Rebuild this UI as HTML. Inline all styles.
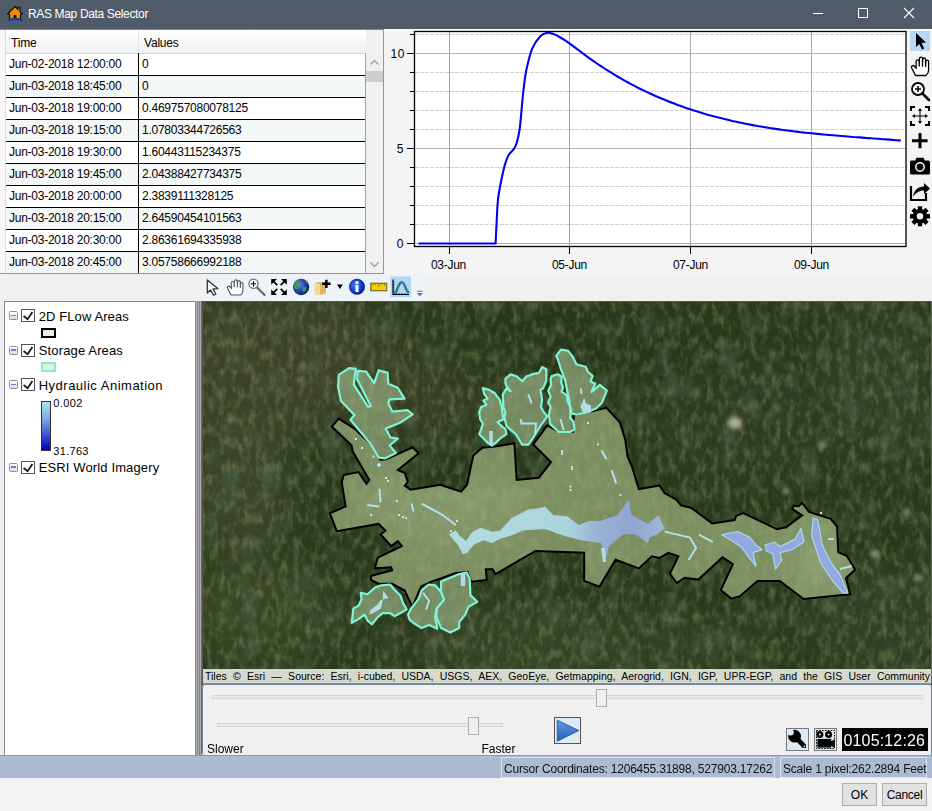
<!DOCTYPE html>
<html><head><meta charset="utf-8">
<style>
*{margin:0;padding:0;box-sizing:border-box}
html,body{width:932px;height:811px;overflow:hidden;background:#f0f0f0;font-family:"Liberation Sans",sans-serif;position:relative}
.a{position:absolute}
.t{position:absolute;white-space:nowrap;line-height:1}
#title{left:0;top:0;width:932px;height:29px;background:#4f5b69}
#tbl{left:0;top:29px;width:384px;height:245px;background:#fff}
.row{position:absolute;left:6px;width:359px;height:22px;border-top:1px solid #000}
.row:first-of-type{border-top:none}
.row.e{background:#f3f8f6}
.cell{position:absolute;top:4px;font-size:12px;letter-spacing:-0.25px;color:#000;white-space:nowrap;line-height:1}
#chart{left:384px;top:29px;width:548px;height:245px;background:#f4f4f4}
#legend{left:4px;top:301px;width:192px;height:455px;background:#fff;border:1px solid #828790}
#map{left:202px;top:301px;width:730px;height:384px;background:#3f4d30;overflow:hidden}
#anim{left:202px;top:684px;width:730px;height:71px;background:#f0f0f0;border-left:1px solid #70859c;border-right:1px solid #6a8098;border-radius:3px 3px 0 3px;box-shadow:inset 0 1px 0 #70859c}
#status{left:0;top:755px;width:932px;height:23px;background:#adbbd2;border-top:1px solid #8d9aab}
#bottom{left:0;top:778px;width:932px;height:33px;background:#f3f3f3}
.btn{position:absolute;background:#e1e1e1;border:1px solid #adadad;font-size:13px;text-align:center;line-height:23px;color:#000}
</style></head><body>

<!-- Title bar -->
<div id="title" class="a">
  <svg class="a" style="left:6px;top:4px" width="18" height="18" viewBox="0 0 18 18">
    <path d="M1.5 10 L9 2.5 L12 5.5 L12 3 L14 3 L14 7.5 L16.5 10 L14.5 10 L14.5 15 L3.5 15 L3.5 10 Z" fill="#f08c00" stroke="#111" stroke-width="1.2" stroke-linejoin="round"/>
    <rect x="7.5" y="11" width="3" height="4" fill="#111"/>
    <path d="M1 15.5 Q9 12.5 17 15.5 L16 17.5 Q9 15 2 17.5 Z" fill="#1540b0"/>
  </svg>
  <div class="t" style="left:28px;top:7.5px;font-size:12px;letter-spacing:-0.35px;color:#fff">RAS Map Data Selector</div>
  <div class="a" style="left:813px;top:13px;width:10px;height:1px;background:#fff"></div>
  <div class="a" style="left:858px;top:8px;width:10px;height:10px;border:1px solid #fff"></div>
  <svg class="a" style="left:903px;top:7px" width="12" height="12" viewBox="0 0 12 12"><path d="M1 1 L11 11 M11 1 L1 11" stroke="#fff" stroke-width="1.1"/></svg>
</div>


<!-- Table -->
<div id="tbl" class="a">
  <div class="a" style="left:0;top:0;width:6px;height:244px;background:#f7f7f7;border-right:1px solid #dcdcdc"></div>
  <div class="a" style="left:6px;top:0;width:360px;height:25px;background:linear-gradient(#fff,#f1f2f4);border-bottom:1px solid #d5d5d5"></div>
  <div class="a" style="left:138px;top:1px;width:1px;height:22px;background:#e4e4e4"></div>
  <div class="t" style="left:11px;top:8px;font-size:12px;letter-spacing:-0.2px">Time</div>
  <div class="t" style="left:144px;top:8px;font-size:12px;letter-spacing:-0.2px">Values</div>
<div class="row" style="top:24px;border-top:1px solid transparent;background-clip:padding-box"><div class="cell" style="left:3px">Jun-02-2018 12:00:00</div><div class="cell" style="left:136px">0</div></div>
<div class="row e" style="top:46px"><div class="cell" style="left:3px">Jun-03-2018 18:45:00</div><div class="cell" style="left:136px">0</div></div>
<div class="row" style="top:68px"><div class="cell" style="left:3px">Jun-03-2018 19:00:00</div><div class="cell" style="left:136px">0.469757080078125</div></div>
<div class="row e" style="top:90px"><div class="cell" style="left:3px">Jun-03-2018 19:15:00</div><div class="cell" style="left:136px">1.07803344726563</div></div>
<div class="row" style="top:112px"><div class="cell" style="left:3px">Jun-03-2018 19:30:00</div><div class="cell" style="left:136px">1.60443115234375</div></div>
<div class="row e" style="top:134px"><div class="cell" style="left:3px">Jun-03-2018 19:45:00</div><div class="cell" style="left:136px">2.04388427734375</div></div>
<div class="row" style="top:156px"><div class="cell" style="left:3px">Jun-03-2018 20:00:00</div><div class="cell" style="left:136px">2.3839111328125</div></div>
<div class="row e" style="top:178px"><div class="cell" style="left:3px">Jun-03-2018 20:15:00</div><div class="cell" style="left:136px">2.64590454101563</div></div>
<div class="row" style="top:200px"><div class="cell" style="left:3px">Jun-03-2018 20:30:00</div><div class="cell" style="left:136px">2.86361694335938</div></div>
<div class="row e" style="top:222px"><div class="cell" style="left:3px">Jun-03-2018 20:45:00</div><div class="cell" style="left:136px">3.05758666992188</div></div>

  <div class="a" style="left:138px;top:24px;width:1px;height:220px;background:#000"></div>
  <div class="a" style="left:365px;top:24px;width:1px;height:220px;background:#a0a0a0"></div>
  <div class="a" style="left:366px;top:0;width:17px;height:244px;background:#f0f0f0"></div>
  <svg class="a" style="left:369px;top:29px" width="11" height="8" viewBox="0 0 11 8"><path d="M1.5 6.5 L5.5 2.5 L9.5 6.5" fill="none" stroke="#a0a0a0" stroke-width="1.4"/></svg>
  <div class="a" style="left:366px;top:42px;width:17px;height:11px;background:#cdcdcd"></div>
  <svg class="a" style="left:369px;top:232px" width="11" height="8" viewBox="0 0 11 8"><path d="M1.5 1.5 L5.5 5.5 L9.5 1.5" fill="none" stroke="#a0a0a0" stroke-width="1.4"/></svg>
  <div class="a" style="left:383px;top:0;width:1px;height:245px;background:#7d9cc4"></div>
  <div class="a" style="left:0;top:244px;width:384px;height:1px;background:#7d9cc4"></div>
</div>

<!-- Chart -->
<div id="chart" class="a">
<svg class="a" style="left:0;top:0" width="548" height="245" viewBox="384 29 548 245">
<rect x="414.5" y="31.5" width="491.5" height="215" fill="#fff"/>
<line x1="415" y1="34.5" x2="906" y2="34.5" stroke="#d2d2d2" stroke-width="1" stroke-dasharray="4 1"/>
<line x1="410" y1="34.5" x2="414" y2="34.5" stroke="#000" stroke-width="1"/>
<line x1="415" y1="72.5" x2="906" y2="72.5" stroke="#d2d2d2" stroke-width="1" stroke-dasharray="4 1"/>
<line x1="410" y1="72.5" x2="414" y2="72.5" stroke="#000" stroke-width="1"/>
<line x1="415" y1="91.5" x2="906" y2="91.5" stroke="#d2d2d2" stroke-width="1" stroke-dasharray="4 1"/>
<line x1="410" y1="91.5" x2="414" y2="91.5" stroke="#000" stroke-width="1"/>
<line x1="415" y1="110.5" x2="906" y2="110.5" stroke="#d2d2d2" stroke-width="1" stroke-dasharray="4 1"/>
<line x1="410" y1="110.5" x2="414" y2="110.5" stroke="#000" stroke-width="1"/>
<line x1="415" y1="129.5" x2="906" y2="129.5" stroke="#d2d2d2" stroke-width="1" stroke-dasharray="4 1"/>
<line x1="410" y1="129.5" x2="414" y2="129.5" stroke="#000" stroke-width="1"/>
<line x1="415" y1="167.5" x2="906" y2="167.5" stroke="#d2d2d2" stroke-width="1" stroke-dasharray="4 1"/>
<line x1="410" y1="167.5" x2="414" y2="167.5" stroke="#000" stroke-width="1"/>
<line x1="415" y1="186.5" x2="906" y2="186.5" stroke="#d2d2d2" stroke-width="1" stroke-dasharray="4 1"/>
<line x1="410" y1="186.5" x2="414" y2="186.5" stroke="#000" stroke-width="1"/>
<line x1="415" y1="205.5" x2="906" y2="205.5" stroke="#d2d2d2" stroke-width="1" stroke-dasharray="4 1"/>
<line x1="410" y1="205.5" x2="414" y2="205.5" stroke="#000" stroke-width="1"/>
<line x1="415" y1="224.5" x2="906" y2="224.5" stroke="#d2d2d2" stroke-width="1" stroke-dasharray="4 1"/>
<line x1="410" y1="224.5" x2="414" y2="224.5" stroke="#000" stroke-width="1"/>
<line x1="415" y1="53.5" x2="906" y2="53.5" stroke="#b4b4b4" stroke-width="1"/>
<line x1="407" y1="53.5" x2="414" y2="53.5" stroke="#000" stroke-width="1"/>
<line x1="415" y1="148.5" x2="906" y2="148.5" stroke="#b4b4b4" stroke-width="1"/>
<line x1="407" y1="148.5" x2="414" y2="148.5" stroke="#000" stroke-width="1"/>
<line x1="415" y1="243.5" x2="906" y2="243.5" stroke="#b4b4b4" stroke-width="1"/>
<line x1="407" y1="243.5" x2="414" y2="243.5" stroke="#000" stroke-width="1"/>
<line x1="449.5" y1="32" x2="449.5" y2="246" stroke="#a8a8a8" stroke-width="1"/>
<line x1="449.5" y1="246" x2="449.5" y2="254" stroke="#000" stroke-width="1"/>
<line x1="569.5" y1="32" x2="569.5" y2="246" stroke="#a8a8a8" stroke-width="1"/>
<line x1="569.5" y1="246" x2="569.5" y2="254" stroke="#000" stroke-width="1"/>
<line x1="690.5" y1="32" x2="690.5" y2="246" stroke="#a8a8a8" stroke-width="1"/>
<line x1="690.5" y1="246" x2="690.5" y2="254" stroke="#000" stroke-width="1"/>
<line x1="811.5" y1="32" x2="811.5" y2="246" stroke="#a8a8a8" stroke-width="1"/>
<line x1="811.5" y1="246" x2="811.5" y2="254" stroke="#000" stroke-width="1"/>
<path d="M418.5,243.5 L495.6,243.5 C495.8,238.8 496.1,232.2 496.5,225.0 C496.9,217.8 497.2,207.6 497.9,200.5 C498.6,193.4 499.6,188.6 500.8,182.7 C502.0,176.8 503.5,169.6 504.8,165.0 C506.1,160.4 507.2,157.6 508.7,155.0 C510.2,152.4 512.4,151.1 513.7,149.2 C515.0,147.2 515.6,146.6 516.6,143.3 C517.6,140.0 518.8,135.0 519.6,129.4 C520.4,123.8 521.0,116.3 521.6,109.7 C522.2,103.1 522.7,96.7 523.5,90.0 C524.3,83.3 525.0,76.3 526.5,69.4 C528.0,62.5 529.9,54.2 532.2,48.6 C534.6,43.0 538.1,38.7 540.6,36.1 C543.1,33.5 545.4,33.1 547.5,32.8 C549.6,32.5 551.5,33.3 553.5,34.0 C555.5,34.7 557.5,35.9 559.5,37.0 C561.5,38.1 563.5,39.4 565.5,40.7 C567.5,42.0 569.5,43.4 571.5,44.8 C573.5,46.3 575.5,47.8 577.5,49.3 C579.5,50.8 581.5,52.3 583.5,53.8 C585.5,55.3 587.5,56.8 589.5,58.3 C591.5,59.7 593.5,61.1 595.5,62.5 C597.5,63.9 599.5,65.2 601.5,66.5 C603.5,67.9 605.5,69.2 607.5,70.4 C609.5,71.7 611.5,72.9 613.5,74.1 C615.5,75.4 617.5,76.5 619.5,77.7 C621.5,78.9 623.5,80.0 625.5,81.1 C627.5,82.2 629.5,83.3 631.5,84.4 C633.5,85.4 635.5,86.4 637.5,87.5 C639.5,88.5 641.5,89.5 643.5,90.4 C645.5,91.4 647.5,92.3 649.5,93.3 C651.5,94.2 653.5,95.1 655.5,96.0 C657.5,96.8 659.5,97.7 661.5,98.5 C663.5,99.4 665.5,100.2 667.5,101.0 C669.5,101.8 671.5,102.6 673.5,103.3 C675.5,104.1 677.5,104.8 679.5,105.6 C681.5,106.3 683.5,107.0 685.5,107.7 C687.5,108.4 689.5,109.0 691.5,109.7 C693.5,110.4 695.5,111.0 697.5,111.6 C699.5,112.2 701.5,112.8 703.5,113.4 C705.5,114.0 707.5,114.6 709.5,115.2 C711.5,115.7 713.5,116.3 715.5,116.8 C717.5,117.3 719.5,117.8 721.5,118.3 C723.5,118.8 725.5,119.3 727.5,119.8 C729.5,120.3 731.5,120.7 733.5,121.2 C735.5,121.6 737.5,122.1 739.5,122.5 C741.5,122.9 743.5,123.3 745.5,123.7 C747.5,124.1 749.5,124.5 751.5,124.9 C753.5,125.3 755.5,125.6 757.5,126.0 C759.5,126.3 761.5,126.7 763.5,127.0 C765.5,127.3 767.5,127.7 769.5,128.0 C771.5,128.3 773.5,128.6 775.5,128.9 C777.5,129.2 779.5,129.5 781.5,129.7 C783.5,130.0 785.5,130.3 787.5,130.5 C789.5,130.8 791.5,131.1 793.5,131.3 C795.5,131.5 797.5,131.8 799.5,132.0 C801.5,132.2 803.5,132.5 805.5,132.7 C807.5,132.9 809.5,133.1 811.5,133.3 C813.5,133.5 815.5,133.7 817.5,133.9 C819.5,134.1 821.5,134.3 823.5,134.5 C825.5,134.7 827.5,134.8 829.5,135.0 C831.5,135.2 833.5,135.4 835.5,135.5 C837.5,135.7 839.5,135.9 841.5,136.0 C843.5,136.2 845.5,136.4 847.5,136.5 C849.5,136.7 851.5,136.8 853.5,137.0 C855.5,137.1 857.5,137.3 859.5,137.4 C861.5,137.6 863.5,137.7 865.5,137.9 C867.5,138.0 869.5,138.1 871.5,138.3 C873.5,138.4 875.5,138.6 877.5,138.7 C879.5,138.9 881.5,139.0 883.5,139.2 C885.5,139.3 887.5,139.5 889.5,139.6 C891.5,139.8 893.6,139.9 895.5,140.1 C897.4,140.2 900.0,140.4 900.9,140.5" fill="none" stroke="#0000f5" stroke-width="2.1" stroke-linejoin="round"/>
<rect x="414.5" y="31.5" width="491.5" height="215" fill="none" stroke="#000" stroke-width="1.3"/>
<rect x="910" y="31" width="20" height="20" fill="#b8d9f6"/>
<path d="M916 33 L916 47 L919.3 44 L922 49.5 L924.2 48.5 L921.6 43 L926 42.5 Z" fill="#000"/>
<path d="M915.5 75.5 L911.8 68.2 Q911 66.2 912.5 65.6 Q913.8 65.2 915 66.8 L916.2 68.3 L916 61.5 Q916.2 59.8 917.6 59.8 Q919 59.8 919.1 61.5 L919.2 66 L919.4 58.8 Q919.6 57.2 921 57.2 Q922.4 57.2 922.5 58.8 L922.5 66 L922.7 59.5 Q922.9 58 924.2 58 Q925.5 58 925.6 59.5 L925.6 66.5 L925.9 61.5 Q926.1 60.2 927.3 60.2 Q928.5 60.2 928.6 61.5 L928.6 70 Q928.6 73.5 926 75.5 Z" fill="#fff" stroke="#000" stroke-width="1.3" stroke-linejoin="round"/>
<circle cx="918" cy="89" r="6" fill="#fff" stroke="#000" stroke-width="1.8"/>
<path d="M918 86 L918 92 M915 89 L921 89" stroke="#000" stroke-width="1.6"/>
<path d="M922.3 93.3 L929 100" stroke="#000" stroke-width="2.6" stroke-linecap="round"/>
<path d="M911 111 L911 107 L915 107 M925 107 L929 107 L929 111 M929 121 L929 125 L925 125 M915 125 L911 125 L911 121" fill="none" stroke="#000" stroke-width="2"/>
<path d="M920 109 L920 123 M913 116 L927 116" stroke="#000" stroke-width="1"/>
<path d="M920 108 L918 111 L922 111 Z M920 124 L918 121 L922 121 Z M912 116 L915 114 L915 118 Z M928 116 L925 114 L925 118 Z" fill="#000"/>
<path d="M918.5 133 L921.5 133 L921.5 139.2 L927.6 139.2 L927.6 142.2 L921.5 142.2 L921.5 148.3 L918.5 148.3 L918.5 142.2 L912 142.2 L912 139.2 L918.5 139.2 Z" fill="#000"/>
<path d="M910 162 Q910 160.5 911.5 160.5 L915 160.5 L916.5 157.8 L923.5 157.8 L925 160.5 L928.5 160.5 Q930 160.5 930 162 L930 173 Q930 174.5 928.5 174.5 L911.5 174.5 Q910 174.5 910 173 Z" fill="#000"/>
<circle cx="920" cy="167" r="4.2" fill="none" stroke="#fff" stroke-width="1.5"/>
<path d="M911 186 L911 200 L926 200 L926 193" fill="none" stroke="#000" stroke-width="2.2"/>
<path d="M913 197 C914 190 918 186.5 924 186.5 L924 183 L930 188.5 L924 194 L924 190.5 C919 190.5 915.5 193 913 197 Z" fill="#000"/>
<g transform="translate(920 216.3)">
<path d="M-1.8 -10 L1.8 -10 L2.4 -6.8 L4.6 -5.8 L7.3 -7.7 L9.8 -5.2 L7.9 -2.5 L8.8 -0.3 L10 0 L10 1.8" fill="none"/>
<circle r="7.2" fill="#000"/>
<g fill="#000"><rect x="-2.2" y="-10" width="4.4" height="20"/><rect x="-2.2" y="-10" width="4.4" height="20" transform="rotate(45)"/><rect x="-2.2" y="-10" width="4.4" height="20" transform="rotate(90)"/><rect x="-2.2" y="-10" width="4.4" height="20" transform="rotate(135)"/></g>
<circle r="3.2" fill="#f4f4f4"/>
</g>
</svg>
<div class="t" style="left:0px;top:18.5px;font-size:12px;width:21px;text-align:right;letter-spacing:0.6px">10</div>
<div class="t" style="left:0px;top:113.5px;font-size:12px;width:19.5px;text-align:right">5</div>
<div class="t" style="left:0px;top:208.5px;font-size:12px;width:19.5px;text-align:right">0</div>
<div class="t" style="left:47px;top:230px;font-size:12px;letter-spacing:-0.3px">03-Jun</div>
<div class="t" style="left:168px;top:230px;font-size:12px;letter-spacing:-0.3px">05-Jun</div>
<div class="t" style="left:289px;top:230px;font-size:12px;letter-spacing:-0.3px">07-Jun</div>
<div class="t" style="left:410px;top:230px;font-size:12px;letter-spacing:-0.3px">09-Jun</div>
</div>

<!-- Map toolbar -->
<div class="a" style="left:202px;top:275px;width:224px;height:26px;background:#eef3fa;border-radius:3px 0 0 0"></div>
<svg class="a" style="left:202px;top:274px" width="226" height="28" viewBox="202 274 226 28">
<path d="M207.3 280 L207.3 293 L210.6 290 L213.6 295.2 L215.8 294 L213 289 L217.8 288.6 Z" fill="#fff" stroke="#333" stroke-width="1.3" stroke-linejoin="round"/>
<path d="M231 295 L227.6 288.2 Q227 286.6 228.4 286.2 Q229.6 286 230.6 287.4 L231.6 288.6 L231.2 283 Q231.3 281.5 232.6 281.5 Q233.9 281.5 234 283 L234.2 287 L234.3 281.3 Q234.5 279.9 235.8 279.9 Q237.1 279.9 237.2 281.3 L237.3 287 L237.5 281.9 Q237.7 280.6 238.9 280.6 Q240.1 280.6 240.2 281.9 L240.3 287.5 L240.6 283.6 Q240.8 282.5 241.8 282.5 Q242.8 282.5 242.9 283.6 L242.9 290.5 Q242.9 293.5 240.5 295 Z" fill="#fff" stroke="#555" stroke-width="1.1" stroke-linejoin="round"/>
<path d="M257 287.5 L264.6 295" stroke="#6d6455" stroke-width="2.2" stroke-linecap="round"/>
<circle cx="253.5" cy="283.8" r="4.6" fill="#f4f4f4" stroke="#777" stroke-width="1.3"/>
<path d="M253.5 281.2 L253.5 286.4 M250.9 283.8 L256.1 283.8" stroke="#000" stroke-width="1.1"/>
<g fill="#000"><path d="M271.2 279 L277 279 L271.2 284.8 Z M286.8 279 L281 279 L286.8 284.8 Z M271.2 295 L277 295 L271.2 289.2 Z M286.8 295 L281 295 L286.8 289.2 Z"/></g>
<path d="M273 280.8 L277.3 285.1 M285 280.8 L280.7 285.1 M273 293.2 L277.3 288.9 M285 293.2 L280.7 288.9" stroke="#000" stroke-width="1.7"/>
<defs><radialGradient id="gl" cx="0.35" cy="0.35" r="0.7"><stop offset="0" stop-color="#6a8ee8"/><stop offset="0.6" stop-color="#1d3fae"/><stop offset="1" stop-color="#0c1f6a"/></radialGradient>
<radialGradient id="ig" cx="0.4" cy="0.4" r="0.65"><stop offset="0" stop-color="#4f7ff0"/><stop offset="0.7" stop-color="#0c35c0"/><stop offset="1" stop-color="#061a80"/></radialGradient></defs>
<circle cx="301.1" cy="287" r="8.2" fill="url(#gl)"/>
<path d="M296 282 Q299 280 301 282.5 Q300 285 297.5 285.5 Q296 287 297.5 289 Q296 290 294.5 288 Q293.8 284 296 282 Z M302.5 287 Q305 286 306.5 288 Q306 291 303.5 292 Q302 290 302.5 287 Z M304 280.5 Q307 281.5 308 284 Q306 283.5 304 280.5 Z" fill="#3da040"/>
<path d="M314.8 283 L320 282 L326 283 L326 293.5 L320 295 L314.8 294 Z" fill="#d9b75a"/>
<path d="M314.8 283 L320 284 L320 295 L314.8 294 Z" fill="#f2dc8a"/>
<path d="M322.2 283.8 L330.6 283.8 M326.4 279.8 L326.4 288" stroke="#000" stroke-width="2.4"/>
<path d="M337 284.5 L342.8 284.5 L339.9 289 Z" fill="#000"/>
<circle cx="357" cy="286.8" r="7.7" fill="url(#ig)" stroke="#05207a" stroke-width="0.6"/>
<rect x="355.5" y="285" width="3" height="7" fill="#fff"/>
<rect x="355.5" y="281.3" width="3" height="2.6" fill="#fff"/>
<rect x="370.8" y="283.2" width="16" height="7.6" fill="#f0d000" stroke="#6b5a10" stroke-width="1"/>
<path d="M373 283.7 L373 286 M375.5 283.7 L375.5 285 M378.7 283.7 L378.7 287 M381.8 283.7 L381.8 285 M384.5 283.7 L384.5 286" stroke="#8a7515" stroke-width="0.8"/>
<rect x="390.4" y="276.5" width="20.6" height="20.6" fill="#b4d6f5"/>
<path d="M393 279.5 L393 294.5 L409 294.5" fill="none" stroke="#000" stroke-width="1.2"/>
<path d="M393 282 L394.5 282 M393 285 L394.5 285 M393 288 L394.5 288 M393 291 L394.5 291 M396 294.5 L396 293 M399 294.5 L399 293 M402 294.5 L402 293 M405 294.5 L405 293" stroke="#000" stroke-width="0.8"/>
<path d="M395 293 C397.5 292 398 283 401.5 282.2 C405 281.6 405.5 291 408.2 292.2" fill="none" stroke="#2c8294" stroke-width="2.6" stroke-linecap="round"/>
<path d="M417 291.3 L422.6 291.3" stroke="#777" stroke-width="1"/>
<path d="M416.8 293 L422.8 293 L419.8 296.6 Z" fill="#777"/>
</svg>

<!-- Legend -->
<div id="legend" class="a">
<div class="a" style="left:4px;top:9px;width:9px;height:9px;border:1px solid #8f8f8f;border-radius:1.5px;background:linear-gradient(#fff,#dedede)"><div class="a" style="left:1px;top:2.7px;width:5px;height:1.4px;background:#6a7acc"></div></div>
<div class="a" style="left:16px;top:7px;width:13.5px;height:13px;border:1px solid #555;background:#fff"></div>
<svg class="a" style="left:16px;top:7px" width="14" height="13" viewBox="0 0 14 13"><path d="M2.6 7 L6.6 10.2 L11.4 3" fill="none" stroke="#1a1a1a" stroke-width="1.8"/></svg>
<div class="t" style="left:33.7px;top:7.6px;font-size:13px;letter-spacing:0.1px">2D FLow Areas</div>
<div class="a" style="left:36px;top:25.5px;width:15px;height:10px;border:2px solid #000;background:#e8ede6"></div>
<div class="a" style="left:4px;top:43.5px;width:9px;height:9px;border:1px solid #8f8f8f;border-radius:1.5px;background:linear-gradient(#fff,#dedede)"><div class="a" style="left:1px;top:2.7px;width:5px;height:1.4px;background:#6a7acc"></div></div>
<div class="a" style="left:16px;top:41.5px;width:13.5px;height:13px;border:1px solid #555;background:#fff"></div>
<svg class="a" style="left:16px;top:41.5px" width="14" height="13" viewBox="0 0 14 13"><path d="M2.6 7 L6.6 10.2 L11.4 3" fill="none" stroke="#1a1a1a" stroke-width="1.8"/></svg>
<div class="t" style="left:33.7px;top:42.1px;font-size:13px;letter-spacing:0.15px">Storage Areas</div>
<div class="a" style="left:36px;top:60.3px;width:15px;height:10px;border:2px solid #80f0d0;background:#e6ece6"></div>
<div class="a" style="left:4px;top:78px;width:9px;height:9px;border:1px solid #8f8f8f;border-radius:1.5px;background:linear-gradient(#fff,#dedede)"><div class="a" style="left:1px;top:2.7px;width:5px;height:1.4px;background:#6a7acc"></div></div>
<div class="a" style="left:16px;top:76px;width:13.5px;height:13px;border:1px solid #555;background:#fff"></div>
<svg class="a" style="left:16px;top:76px" width="14" height="13" viewBox="0 0 14 13"><path d="M2.6 7 L6.6 10.2 L11.4 3" fill="none" stroke="#1a1a1a" stroke-width="1.8"/></svg>
<div class="t" style="left:33.7px;top:76.6px;font-size:13px;letter-spacing:0.5px">Hydraulic Animation</div>
<div class="a" style="left:35.8px;top:98.5px;width:10.2px;height:50.3px;border:1px solid #333;background:linear-gradient(#a8e4ee,#7fa8e0 35%,#3850d0 70%,#0000b0)"></div>
<div class="t" style="left:48.3px;top:95.5px;font-size:11px;letter-spacing:0.4px">0.002</div>
<div class="t" style="left:48.3px;top:144.2px;font-size:11px;letter-spacing:0.3px">31.763</div>
<div class="a" style="left:4px;top:160.7px;width:9px;height:9px;border:1px solid #8f8f8f;border-radius:1.5px;background:linear-gradient(#fff,#dedede)"><div class="a" style="left:1px;top:2.7px;width:5px;height:1.4px;background:#6a7acc"></div></div>
<div class="a" style="left:16px;top:158.7px;width:13.5px;height:13px;border:1px solid #555;background:#fff"></div>
<svg class="a" style="left:16px;top:158.7px" width="14" height="13" viewBox="0 0 14 13"><path d="M2.6 7 L6.6 10.2 L11.4 3" fill="none" stroke="#1a1a1a" stroke-width="1.8"/></svg>
<div class="t" style="left:33.7px;top:159.29999999999998px;font-size:13px;letter-spacing:0.13px">ESRI World Imagery</div>
</div>

<!-- Splitter -->
<div class="a" style="left:195px;top:301px;width:7px;height:454px;background:linear-gradient(90deg,#868b95 0,#868b95 1px,#aaa 1px,#aaa 2px,#878787 2px,#878787 3px,#aaa 3px,#aaa 4px,#878787 4px,#878787 5px,#aaa 5px,#aaa 6px,#6a6a6a 6px)"></div>

<!-- Map -->
<!--MAP-->
<div id="map" class="a">
<svg class="a" style="left:0;top:0" width="730" height="384" viewBox="202 301 730 384">
<defs>
<filter id="blur8" x="-50%" y="-50%" width="200%" height="200%"><feGaussianBlur stdDeviation="18"/></filter>
<filter id="noise" x="0" y="0" width="100%" height="100%"><feTurbulence type="fractalNoise" baseFrequency="0.16 0.08" numOctaves="4" seed="11"/><feColorMatrix type="matrix" values="0 0 0 0 0.44  0 0 0 0 0.48  0 0 0 0 0.22  2.2 0 0 0 -0.95"/></filter>
<filter id="noise2" x="0" y="0" width="100%" height="100%"><feTurbulence type="fractalNoise" baseFrequency="0.05 0.035" numOctaves="4" seed="5"/><feColorMatrix type="matrix" values="0 0 0 0 0.09  0 0 0 0 0.16  0 0 0 0 0.09  -2.4 0 0 0 1.25"/></filter>
<linearGradient id="rv" x1="0" y1="0" x2="1" y2="0"><stop offset="0" stop-color="#b8e2ec"/><stop offset="0.55" stop-color="#b0dcea"/><stop offset="0.68" stop-color="#9cb6e2"/><stop offset="0.85" stop-color="#92a8de"/><stop offset="1" stop-color="#a0bce4"/></linearGradient>
<filter id="blur2" x="-100%" y="-100%" width="300%" height="300%"><feGaussianBlur stdDeviation="2.2"/></filter></defs>
<rect x="202" y="301" width="730" height="384" fill="#2a3a1c"/>
<g filter="url(#blur8)">
<ellipse cx="280" cy="360" rx="120" ry="70" fill="#3f4428" opacity="0.9"/>
<ellipse cx="420" cy="400" rx="60" ry="40" fill="#3f4428" opacity="0.5"/>
<ellipse cx="240" cy="480" rx="50" ry="80" fill="#3d4829" opacity="0.8"/>
<ellipse cx="260" cy="610" rx="80" ry="55" fill="#3b4826" opacity="0.8"/>
<ellipse cx="540" cy="645" rx="130" ry="35" fill="#3a4827" opacity="0.7"/>
<ellipse cx="600" cy="340" rx="110" ry="40" fill="#26341c" opacity="0.8"/>
<ellipse cx="740" cy="420" rx="90" ry="60" fill="#2f3d23" opacity="0.7"/>
<ellipse cx="880" cy="380" rx="60" ry="70" fill="#334427" opacity="0.7"/>
<ellipse cx="880" cy="620" rx="70" ry="50" fill="#334427" opacity="0.7"/>
<ellipse cx="700" cy="650" rx="80" ry="30" fill="#364529" opacity="0.6"/>
</g>
<rect x="202" y="301" width="730" height="384" filter="url(#noise)" opacity="0.34"/>
<rect x="202" y="301" width="730" height="384" filter="url(#noise2)" opacity="0.5"/>
<g filter="url(#blur2)" fill="#c0bfa0">
<ellipse cx="735" cy="423" rx="7" ry="6" opacity="0.85"/>
<ellipse cx="786" cy="491" rx="3.5" ry="3.5" opacity="0.6"/>
<ellipse cx="822" cy="445" rx="4" ry="4" opacity="0.5"/>
<ellipse cx="875" cy="554" rx="5" ry="4" opacity="0.6"/>
<ellipse cx="907" cy="512" rx="4" ry="4" opacity="0.5"/>
<ellipse cx="918" cy="578" rx="5" ry="4" opacity="0.5"/>
<ellipse cx="862" cy="526" rx="3" ry="3" opacity="0.5"/>
<ellipse cx="300" cy="380" rx="4" ry="3" opacity="0.4"/>
<ellipse cx="230" cy="420" rx="3" ry="3" opacity="0.4"/>
</g>
<clipPath id="mc"><path d="M338.7 418.7 L354.5 428.6 L370.7 444.1 L380.2 459.7 L386.1 459.2 L412.7 447.3 L418.6 453.3 L397.9 470.0 L404.8 473.0 L407.8 481.9 L404.8 485.8 L410.7 489.8 L440.3 484.8 L461.1 491.7 L467.0 484.8 L473.3 455.5 L482.2 447.7 L495.5 446.6 L514.4 443.3 L516.6 479.9 L538.8 477.7 L551.0 462.1 L533.2 444.4 L547.3 425.3 L557.6 431.1 L573.0 431.7 L573.8 415.6 L606.5 407.8 L619.8 422.2 L625.3 440.0 L627.6 456.6 L632.0 466.6 L638.8 489.0 L659.5 485.5 L664.7 493.3 L675.9 499.3 L681.1 505.4 L691.5 508.0 L712.2 523.5 L734.6 520.0 L736.3 515.7 L743.3 513.1 L777.0 529.3 L786.0 527.2 L802.1 515.3 L792.3 509.1 L793.7 505.6 L798.6 506.3 L802.1 502.8 L809.0 511.9 L830.7 518.8 L837.0 526.5 L838.3 552.3 L846.7 555.8 L855.1 569.7 L846.0 578.1 L850.2 594.2 L803.5 599.0 L779.8 580.9 L757.4 580.9 L740.0 596.2 L731.2 598.6 L720.8 590.0 L732.9 564.1 L722.5 557.2 L698.4 579.6 L684.6 577.9 L676.8 583.0 L669.9 573.6 L678.5 556.3 L668.2 552.8 L659.5 558.0 L651.8 556.3 L638.8 568.4 L615.6 559.7 L599.4 586.8 L584.2 580.9 L584.2 552.8 L535.5 550.9 L495.5 574.2 L492.6 569.2 L485.8 569.2 L486.8 579.9 L471.3 581.8 L467.5 572.1 L455.9 573.1 L430.8 581.8 L421.1 586.6 L412.4 606.9 L404.7 590.5 L392.1 583.7 L378.6 583.7 L370.9 579.9 L370.9 576.0 L392.1 570.2 L391.2 567.3 L374.8 568.3 L377.7 557.7 L401.8 546.1 L397.9 541.2 L391.2 546.1 L380.6 534.5 L385.4 530.6 L378.6 523.9 L336.8 531.2 L329.9 513.4 L345.6 506.5 L341.7 481.9 L343.7 475.0 L358.5 472.0 L366.4 483.8 L369.3 479.9 L352.6 451.3 L351.6 445.4 L331.8 426.6 Z"/></clipPath>
<path d="M338.7 418.7 L354.5 428.6 L370.7 444.1 L380.2 459.7 L386.1 459.2 L412.7 447.3 L418.6 453.3 L397.9 470.0 L404.8 473.0 L407.8 481.9 L404.8 485.8 L410.7 489.8 L440.3 484.8 L461.1 491.7 L467.0 484.8 L473.3 455.5 L482.2 447.7 L495.5 446.6 L514.4 443.3 L516.6 479.9 L538.8 477.7 L551.0 462.1 L533.2 444.4 L547.3 425.3 L557.6 431.1 L573.0 431.7 L573.8 415.6 L606.5 407.8 L619.8 422.2 L625.3 440.0 L627.6 456.6 L632.0 466.6 L638.8 489.0 L659.5 485.5 L664.7 493.3 L675.9 499.3 L681.1 505.4 L691.5 508.0 L712.2 523.5 L734.6 520.0 L736.3 515.7 L743.3 513.1 L777.0 529.3 L786.0 527.2 L802.1 515.3 L792.3 509.1 L793.7 505.6 L798.6 506.3 L802.1 502.8 L809.0 511.9 L830.7 518.8 L837.0 526.5 L838.3 552.3 L846.7 555.8 L855.1 569.7 L846.0 578.1 L850.2 594.2 L803.5 599.0 L779.8 580.9 L757.4 580.9 L740.0 596.2 L731.2 598.6 L720.8 590.0 L732.9 564.1 L722.5 557.2 L698.4 579.6 L684.6 577.9 L676.8 583.0 L669.9 573.6 L678.5 556.3 L668.2 552.8 L659.5 558.0 L651.8 556.3 L638.8 568.4 L615.6 559.7 L599.4 586.8 L584.2 580.9 L584.2 552.8 L535.5 550.9 L495.5 574.2 L492.6 569.2 L485.8 569.2 L486.8 579.9 L471.3 581.8 L467.5 572.1 L455.9 573.1 L430.8 581.8 L421.1 586.6 L412.4 606.9 L404.7 590.5 L392.1 583.7 L378.6 583.7 L370.9 579.9 L370.9 576.0 L392.1 570.2 L391.2 567.3 L374.8 568.3 L377.7 557.7 L401.8 546.1 L397.9 541.2 L391.2 546.1 L380.6 534.5 L385.4 530.6 L378.6 523.9 L336.8 531.2 L329.9 513.4 L345.6 506.5 L341.7 481.9 L343.7 475.0 L358.5 472.0 L366.4 483.8 L369.3 479.9 L352.6 451.3 L351.6 445.4 L331.8 426.6 Z" fill="#9fb480" fill-opacity="0.69"/>
<g clip-path="url(#mc)" filter="url(#blur8)"><ellipse cx="440" cy="505" rx="90" ry="35" fill="#d8e4c8" opacity="0.1"/><ellipse cx="820" cy="560" rx="30" ry="30" fill="#d8e4c8" opacity="0.2"/></g>
<path d="M338.7 418.7 L354.5 428.6 L370.7 444.1 L380.2 459.7 L386.1 459.2 L412.7 447.3 L418.6 453.3 L397.9 470.0 L404.8 473.0 L407.8 481.9 L404.8 485.8 L410.7 489.8 L440.3 484.8 L461.1 491.7 L467.0 484.8 L473.3 455.5 L482.2 447.7 L495.5 446.6 L514.4 443.3 L516.6 479.9 L538.8 477.7 L551.0 462.1 L533.2 444.4 L547.3 425.3 L557.6 431.1 L573.0 431.7 L573.8 415.6 L606.5 407.8 L619.8 422.2 L625.3 440.0 L627.6 456.6 L632.0 466.6 L638.8 489.0 L659.5 485.5 L664.7 493.3 L675.9 499.3 L681.1 505.4 L691.5 508.0 L712.2 523.5 L734.6 520.0 L736.3 515.7 L743.3 513.1 L777.0 529.3 L786.0 527.2 L802.1 515.3 L792.3 509.1 L793.7 505.6 L798.6 506.3 L802.1 502.8 L809.0 511.9 L830.7 518.8 L837.0 526.5 L838.3 552.3 L846.7 555.8 L855.1 569.7 L846.0 578.1 L850.2 594.2 L803.5 599.0 L779.8 580.9 L757.4 580.9 L740.0 596.2 L731.2 598.6 L720.8 590.0 L732.9 564.1 L722.5 557.2 L698.4 579.6 L684.6 577.9 L676.8 583.0 L669.9 573.6 L678.5 556.3 L668.2 552.8 L659.5 558.0 L651.8 556.3 L638.8 568.4 L615.6 559.7 L599.4 586.8 L584.2 580.9 L584.2 552.8 L535.5 550.9 L495.5 574.2 L492.6 569.2 L485.8 569.2 L486.8 579.9 L471.3 581.8 L467.5 572.1 L455.9 573.1 L430.8 581.8 L421.1 586.6 L412.4 606.9 L404.7 590.5 L392.1 583.7 L378.6 583.7 L370.9 579.9 L370.9 576.0 L392.1 570.2 L391.2 567.3 L374.8 568.3 L377.7 557.7 L401.8 546.1 L397.9 541.2 L391.2 546.1 L380.6 534.5 L385.4 530.6 L378.6 523.9 L336.8 531.2 L329.9 513.4 L345.6 506.5 L341.7 481.9 L343.7 475.0 L358.5 472.0 L366.4 483.8 L369.3 479.9 L352.6 451.3 L351.6 445.4 L331.8 426.6 Z" fill="none" stroke="#000" stroke-width="2" stroke-linejoin="miter"/>
<path d="M338.8 374.9 L349.0 368.1 L355.8 368.8 L353.7 384.4 L368.0 406.8 L370.7 406.1 L357.1 379.0 L357.8 370.9 L366.0 371.5 L374.1 383.1 L378.8 370.2 L387.7 372.9 L388.3 383.7 L397.8 387.8 L404.6 398.7 L389.7 399.3 L388.3 403.4 L392.4 411.6 L407.3 410.2 L412.8 414.3 L400.6 422.4 L385.6 428.5 L390.4 437.3 L397.8 438.7 L389.7 445.5 L395.8 452.9 L385.0 458.4 L378.8 457.7 L370.7 444.1 L350.4 419.7 L354.4 415.0 L340.9 400.7 L338.1 387.1 Z" fill="#98b082" fill-opacity="0.68" stroke="#7ff3d3" stroke-width="2.2" stroke-linejoin="round"/>
<path d="M482.9 388.1 L488.6 389.6 L494.9 393.3 L499.6 399.6 L501.7 406.9 L502.8 414.3 L503.3 419.5 L497.5 422.1 L501.2 425.8 L505.4 428.9 L506.4 434.2 L500.2 438.4 L496.0 442.6 L491.8 445.7 L487.6 442.6 L482.3 437.3 L479.2 434.2 L481.3 428.9 L482.9 423.7 L480.2 419.5 L479.2 412.2 L481.3 406.9 L486.5 404.8 L483.4 400.6 L487.6 398.5 L484.4 394.4 Z" fill="#98b082" fill-opacity="0.68" stroke="#7ff3d3" stroke-width="2.2" stroke-linejoin="round"/>
<path d="M505.4 378.6 L510.6 374.4 L516.9 376.5 L522.2 381.2 L526.4 376.5 L533.7 373.9 L539.0 372.9 L542.1 367.1 L546.3 369.2 L546.3 380.7 L543.1 388.1 L540.5 390.2 L542.1 399.6 L541.0 406.9 L543.1 411.1 L547.3 416.4 L542.1 423.7 L537.9 430.0 L532.7 438.4 L528.5 444.7 L522.2 444.7 L515.9 434.2 L510.6 430.0 L506.4 425.8 L504.4 417.4 L505.4 412.2 L503.3 406.9 L502.8 394.4 L506.4 388.6 L510.6 391.2 L506.4 386.0 L505.4 382.8 Z" fill="#98b082" fill-opacity="0.68" stroke="#7ff3d3" stroke-width="2.2" stroke-linejoin="round"/>
<path d="M551.7 376.1 L557.6 374.3 L561.7 376.7 L561.1 382.5 L562.9 387.2 L561.7 391.9 L567.0 395.4 L567.5 401.3 L571.7 409.5 L569.9 417.7 L573.4 421.2 L574.6 429.4 L570.5 431.8 L558.8 431.8 L550.6 424.7 L548.8 415.3 L550.6 407.1 L548.2 402.4 L550.6 396.6 L548.2 390.7 L551.1 384.9 L550.6 379.0 Z" fill="#98b082" fill-opacity="0.68" stroke="#7ff3d3" stroke-width="2.2" stroke-linejoin="round"/>
<path d="M556.4 355.6 L561.1 349.7 L568.1 350.9 L572.8 356.7 L576.3 364.3 L585.7 366.7 L588.1 372.0 L592.8 376.1 L590.4 381.3 L595.1 383.7 L591.6 391.9 L599.8 384.9 L606.8 390.7 L602.1 402.4 L596.3 408.3 L586.9 412.4 L576.3 414.8 L570.5 413.0 L569.3 400.1 L567.5 391.9 L565.2 380.2 L561.1 369.6 L558.2 360.2 Z" fill="#98b082" fill-opacity="0.68" stroke="#7ff3d3" stroke-width="2.2" stroke-linejoin="round"/>
<path d="M360.8 592.8 L367.5 594.3 L375.0 587.5 L381.1 585.3 L390.1 584.5 L394.6 589.8 L400.6 595.8 L402.8 602.6 L406.6 609.3 L400.6 613.1 L394.6 616.1 L390.1 613.1 L382.6 613.1 L377.3 617.6 L372.0 624.3 L367.5 620.6 L364.5 614.6 L358.5 619.1 L351.8 622.8 L353.3 608.6 L358.5 605.6 L361.5 599.6 Z" fill="#98b082" fill-opacity="0.68" stroke="#7ff3d3" stroke-width="2.2" stroke-linejoin="round"/>
<path d="M411.1 608.6 L418.6 598.8 L421.6 590.5 L428.4 584.5 L435.1 585.3 L441.1 592.0 L444.1 599.6 L436.6 608.6 L435.1 616.8 L437.4 628.8 L429.1 625.1 L421.6 628.1 L415.6 624.3 L409.6 619.8 L408.1 614.6 Z" fill="#98b082" fill-opacity="0.68" stroke="#7ff3d3" stroke-width="2.2" stroke-linejoin="round"/>
<path d="M441.1 581.5 L450.2 577.8 L459.2 574.0 L466.7 572.5 L469.7 578.5 L470.4 595.0 L477.2 601.8 L468.2 607.1 L465.2 614.6 L459.2 622.1 L459.2 628.1 L450.2 632.6 L441.1 628.1 L436.6 617.6 L436.6 608.6 L444.1 599.6 L441.1 592.0 Z" fill="#98b082" fill-opacity="0.68" stroke="#7ff3d3" stroke-width="2.2" stroke-linejoin="round"/>
<path d="M448.8 534.6 L455.8 530.4 L460.0 536.0 L466.0 541.0 L472.5 531.8 L480.9 527.7 L492.0 531.8 L500.4 530.4 L511.6 517.9 L528.3 509.5 L539.5 508.1 L545.0 506.7 L553.4 515.1 L567.4 516.5 L578.5 524.9 L589.7 520.7 L600.0 521.0 L618.0 515.0 L628.5 500.0 L631.5 515.0 L648.0 524.0 L658.6 515.0 L664.6 528.6 L657.0 534.6 L649.5 537.6 L648.0 543.6 L636.0 534.6 L624.0 534.0 L609.2 545.8 L606.4 556.9 L600.8 543.0 L581.3 540.2 L564.6 536.0 L545.0 529.0 L522.7 530.4 L514.4 534.6 L500.4 538.8 L492.0 543.0 L483.7 540.2 L473.9 544.4 L467.0 552.8 L462.8 554.2 L458.0 545.0 L452.0 538.0 Z" fill="url(#rv)" fill-opacity="0.9"/>
<path d="M721.6 534.6 L738.0 531.6 L750.0 537.6 L756.0 545.0 L762.0 549.6 L753.0 552.6 L756.0 566.0 L748.6 557.0 L741.0 546.6 L729.0 539.0 Z" fill="#92a8de" stroke="#a8d4ea" stroke-width="1.3" stroke-linejoin="round"/>
<path d="M765.0 545.0 L774.0 542.0 L780.0 546.6 L795.0 539.0 L801.0 528.6 L804.0 542.0 L792.0 549.6 L780.0 552.6 L781.7 560.0 L775.7 569.0 L772.7 554.0 L766.7 551.0 Z" fill="#92a8de" stroke="#a8d4ea" stroke-width="1.3" stroke-linejoin="round"/>
<path d="M813.2 518.0 L817.7 519.5 L822.2 545.0 L831.2 563.0 L840.2 575.0 L847.7 593.0 L843.2 593.0 L832.7 581.0 L820.7 563.0 L811.7 536.0 Z" fill="#92a8de" stroke="#a8d4ea" stroke-width="1.3" stroke-linejoin="round"/>
<path d="M383.1 590.5 L388.6 598.0 L380.3 600.3 L377.3 604.8 L370.5 610.1 L369.0 614.6 L373.5 613.1 L381.0 608.6 L382.6 601.0 Z" fill="#b0dce8"/>
<path d="M584.0 398.3 L586.3 403.6 L591.0 405.4 L591.0 412.4 L583.4 413.0 L580.4 407.1 Z" fill="#b0dce8"/>
<path d="M460.7 574.0 L465.2 574.0 L465.2 586.0 L460.7 586.0 Z" fill="#b0dce8"/>
<path d="M489.2 431.0 L492.8 431.0 L492.8 444.7 L489.2 444.7 Z" fill="#b0dce8"/>
<path d="M562 450 L562 455" fill="none" stroke="#b0e0ea" stroke-width="2"/>
<path d="M601.4 450.2 L606.6 459.2" fill="none" stroke="#b0e0ea" stroke-width="2"/>
<path d="M572 466 L572 470" fill="none" stroke="#b0e0ea" stroke-width="2"/>
<path d="M611.7 470.1 L616.2 483.7" fill="none" stroke="#b0e0ea" stroke-width="2"/>
<path d="M379.5 488.8 L380.5 502.6" fill="none" stroke="#b0e0ea" stroke-width="2"/>
<path d="M367.3 505 L379.2 506.5" fill="none" stroke="#b0e0ea" stroke-width="2"/>
<path d="M411.5 503.6 L413.5 511.4" fill="none" stroke="#b0e0ea" stroke-width="2"/>
<path d="M377 465 L381 465" fill="none" stroke="#b0e0ea" stroke-width="2"/>
<path d="M379 463 L379 467" fill="none" stroke="#b0e0ea" stroke-width="2"/>
<path d="M604 548 L605 562" fill="none" stroke="#b0e0ea" stroke-width="2"/>
<path d="M421.6 503.6 L430.7 508.5 L441.8 514.5 L448 519 L456 525.2" fill="none" stroke="#b0e0ea" stroke-width="2"/>
<path d="M664.6 531.6 L690 537.6 L696 548 L688.6 560" fill="none" stroke="#b0e0ea" stroke-width="2"/>
<path d="M699 534.6 L712.6 542" fill="none" stroke="#b0e0ea" stroke-width="2"/>
<path d="M828 539 L834 539" fill="none" stroke="#b0e0ea" stroke-width="2"/>
<path d="M840 569 L852 566" fill="none" stroke="#b0e0ea" stroke-width="2"/>
<path d="M602 548 L604 562" fill="none" stroke="#b0e0ea" stroke-width="2"/>
<path d="M423.1 592.8 L429.1 601 L426.1 609.3" fill="none" stroke="#b0e0ea" stroke-width="2"/>
<path d="M520.5 419 L521.5 423.5 L536 423.5 L535 434" fill="none" stroke="#b0e0ea" stroke-width="2"/>
<path d="M528.5 394.5 L531.5 403.5" fill="none" stroke="#b0e0ea" stroke-width="2"/>
<path d="M581 388.5 L581.5 394" fill="none" stroke="#b0e0ea" stroke-width="2"/>
<path d="M560.5 419 L563.5 430" fill="none" stroke="#b0e0ea" stroke-width="2"/>
<rect x="355" y="438" width="2" height="2" fill="#c0e6ee"/>
<rect x="361" y="447" width="2" height="2" fill="#c0e6ee"/>
<rect x="372.5" y="455.5" width="2" height="2" fill="#c0e6ee"/>
<rect x="385" y="477" width="2" height="2" fill="#c0e6ee"/>
<rect x="387" y="480" width="2" height="2" fill="#c0e6ee"/>
<rect x="396" y="500" width="2" height="2" fill="#c0e6ee"/>
<rect x="398" y="514" width="2" height="2" fill="#c0e6ee"/>
<rect x="402" y="516" width="2" height="2" fill="#c0e6ee"/>
<rect x="405" y="517" width="2" height="2" fill="#c0e6ee"/>
<rect x="370" y="514" width="2" height="2" fill="#c0e6ee"/>
<rect x="587" y="422" width="2" height="2" fill="#c0e6ee"/>
<rect x="597" y="443.5" width="2" height="2" fill="#c0e6ee"/>
<rect x="569.5" y="485.5" width="2" height="2" fill="#c0e6ee"/>
<rect x="569.5" y="489" width="2" height="2" fill="#c0e6ee"/>
<rect x="619.5" y="494" width="2" height="2" fill="#c0e6ee"/>
<rect x="820" y="512" width="2" height="2" fill="#c0e6ee"/>
<rect x="456" y="520" width="2" height="2" fill="#c0e6ee"/>
<rect x="450" y="530" width="2" height="2" fill="#c0e6ee"/>
<rect x="202" y="669" width="730" height="15" fill="#d6d9cd"/>
<rect x="202" y="683" width="730" height="1" fill="#8c8c8c"/>
<rect x="202" y="301" width="730" height="1" fill="#555"/>
<rect x="202" y="301" width="1" height="383" fill="#555"/>
<rect x="931" y="301" width="1" height="383" fill="#666"/>
</svg>
<div class="t" style="left:3px;top:369.8px;width:725px;font-size:10.5px;text-align:justify;text-align-last:justify;color:#000">Tiles © Esri — Source: Esri, i-cubed, USDA, USGS, AEX, GeoEye, Getmapping, Aerogrid, IGN, IGP, UPR-EGP, and the GIS User Community</div>
</div>
<!-- Animation -->
<div id="anim" class="a">
<div class="a" style="left:9px;top:11px;width:711px;height:4px;background:#e7eaea;border:1px solid #d6d6d6"></div>
<div class="a" style="left:393px;top:5px;width:11px;height:18px;background:#f0f0f0;border:1px solid #adadad"></div>
<div class="a" style="left:14px;top:39px;width:286px;height:4px;background:#e7eaea;border:1px solid #d6d6d6"></div>
<div class="a" style="left:265px;top:33px;width:11px;height:18px;background:#f0f0f0;border:1px solid #adadad"></div>
<div class="t" style="left:4px;top:59px;font-size:12px">Slower</div>
<div class="t" style="left:278.5px;top:59px;font-size:12px">Faster</div>
<div class="a" style="left:351px;top:33px;width:27px;height:27px;background:#dceaf6;border:1px solid #555"></div>
<svg class="a" style="left:351px;top:33px" width="27" height="27" viewBox="0 0 27 27"><defs><linearGradient id="pg" x1="0" y1="0" x2="0" y2="1"><stop offset="0" stop-color="#5d9ae0"/><stop offset="1" stop-color="#2860b8"/></linearGradient></defs><path d="M3.3 3.2 L24.8 13.5 L3.3 24.2 Z" fill="url(#pg)" stroke="#1d4a90" stroke-width="0.8"/></svg>
<div class="a" style="left:583px;top:44px;width:23px;height:23px;background:#dceaf6;border:1px solid #7a7a7a"></div>
<svg class="a" style="left:583px;top:44px" width="23" height="23" viewBox="0 0 23 23"><defs><mask id="wm"><rect width="23" height="23" fill="#fff"/><circle cx="4.6" cy="4.3" r="3.2" fill="#000"/><path d="M4.6 4.3 L0 -0.5" stroke="#000" stroke-width="4.6"/><circle cx="18.4" cy="18.4" r="0.9" fill="#000"/></mask></defs><g mask="url(#wm)"><circle cx="8.6" cy="8.2" r="6.4" fill="#000"/><path d="M8.6 8.2 L18.6 18.6" stroke="#000" stroke-width="4.8" stroke-linecap="round"/></g></svg>
<div class="a" style="left:611px;top:44px;width:23px;height:23px;background:#dceaf6;border:1px solid #7a7a7a"></div>
<svg class="a" style="left:611px;top:44px" width="23" height="23" viewBox="0 0 23 23"><rect x="2.5" y="2.5" width="18" height="18" fill="none" stroke="#000" stroke-width="1" stroke-dasharray="1.6 1.2"/><circle cx="5.9" cy="6.4" r="3.5" fill="#000"/><circle cx="14.6" cy="6.4" r="3.5" fill="#000"/><circle cx="5.9" cy="6.4" r="1" fill="#dceaf6"/><circle cx="14.6" cy="6.4" r="1" fill="#dceaf6"/><rect x="3.4" y="10.9" width="13.8" height="8.7" fill="#000"/><path d="M17 13.2 L21 11.2 L21 20 L17 18 Z" fill="#111"/></svg>
<div class="a" style="left:639px;top:44px;width:86px;height:23px;background:#000"></div>
<div class="t" style="left:640.5px;top:48.5px;font-size:16px;color:#fff;letter-spacing:0.15px">0105:12:26</div>
</div>

<!-- Status -->
<div id="status" class="a">
<div class="a" style="left:501px;top:1px;width:274px;height:21px;background:#adbbd2;border:1px solid #dbe3ee"></div>
<div class="t" style="left:504px;top:6.5px;font-size:12px;color:#111;letter-spacing:-0.2px">Cursor Coordinates: 1206455.31898, 527903.17262</div>
<div class="a" style="left:780px;top:1px;width:147px;height:21px;background:#adbbd2;border:1px solid #dbe3ee"></div>
<div class="t" style="left:783px;top:6.5px;font-size:12px;color:#111;letter-spacing:-0.2px">Scale 1 pixel:262.2894 Feet</div>
</div>

<!-- Bottom -->
<div id="bottom" class="a">
  <div class="btn" style="left:842px;top:5px;width:35px;height:23px;font-size:12px">OK</div>
  <div class="btn" style="left:882px;top:5px;width:45px;height:23px;font-size:12px;letter-spacing:-0.3px">Cancel</div>
</div>
<div class="a" style="left:0;top:29px;width:384px;height:1px;background:#6a90ba"></div><div class="a" style="left:384px;top:29px;width:548px;height:1px;background:#fff"></div>
</body></html>
